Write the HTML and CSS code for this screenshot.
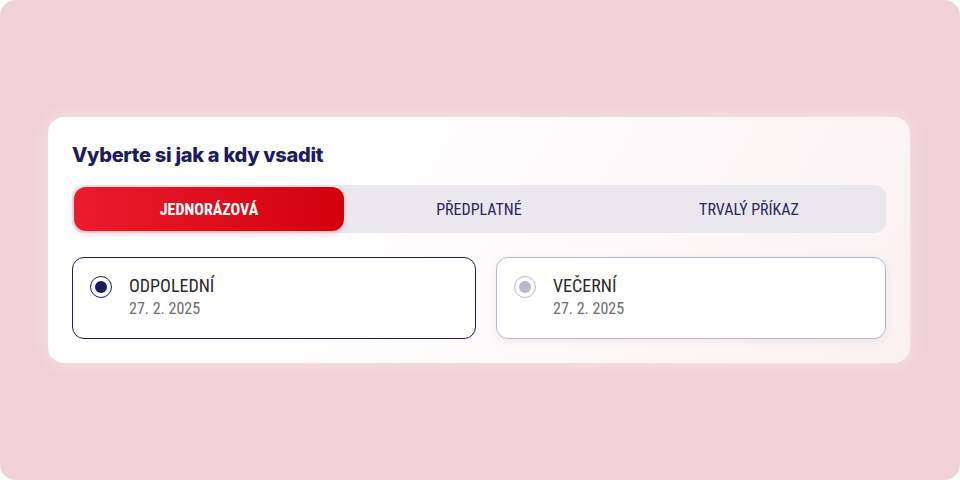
FILE: index.html
```html
<!DOCTYPE html>
<html lang="cs">
<head>
    <meta charset="UTF-8">
    <meta name="viewport" content="width=device-width, initial-scale=1.0">
    <title>Vyberte si jak a kdy vsadit</title>
    <link rel="stylesheet" href="styles.css">
</head>
<body>
    <div class="frame">
        <div class="card">
            <h2 class="title">Vyberte si jak a kdy vsadit</h2>
            <div class="tabs">
                <button class="tab active">JEDNORÁZOVÁ</button>
                <button class="tab">PŘEDPLATNÉ</button>
                <button class="tab">TRVALÝ PŘÍKAZ</button>
            </div>
            <div class="draws">
                <label class="draw selected">
                    <span class="radio"></span>
                    <span class="draw-text">
                        <span class="draw-name">ODPOLEDNÍ</span>
                        <span class="draw-date">27. 2. 2025</span>
                    </span>
                </label>
                <label class="draw">
                    <span class="radio"></span>
                    <span class="draw-text">
                        <span class="draw-name">VEČERNÍ</span>
                        <span class="draw-date">27. 2. 2025</span>
                    </span>
                </label>
            </div>
        </div>
    </div>
</body>
</html>
```

FILE: styles.css
```css
body {
    margin: 0;
    background: #fff;
    font-family: Roboto, "Liberation Sans", sans-serif;
}
.frame {
    height: 480px;
    box-sizing: border-box;
    background: #f0d2d6;
    border-radius: 16px;
    padding: 117px 50px 0 48px;
}
.card {
    background: linear-gradient(120deg, #ffffff 30%, #fbf1f3 100%);
    border-radius: 16px;
    padding: 26px 24px 24px;
    box-shadow: 0 0 20px rgba(255, 255, 255, 0.4);
}
.title {
    margin: 0 0 18px;
    font-family: Inter, sans-serif;
    font-size: 20px;
    line-height: 24px;
    font-weight: 800;
    color: #1e1c5c;
    letter-spacing: -0.3px;
}
.tabs {
    display: grid;
    grid-template-columns: repeat(3, 1fr);
    padding: 2px;
    height: 48px;
    box-sizing: border-box;
    background: #ebe7ef;
    border-radius: 12px;
}
.tab {
    border: 0;
    background: none;
    border-radius: 12px;
    font-family: "Roboto Condensed", Roboto, sans-serif;
    font-stretch: condensed;
    font-size: 16px;
    color: #2a2660;
    cursor: pointer;
}
.tab.active {
    background: linear-gradient(90deg, #ea1c2d, #d3000e);
    color: #fff;
    font-weight: 700;
    box-shadow: 0 2px 6px rgba(210, 0, 20, 0.2);
}
.draws {
    display: grid;
    grid-template-columns: 404px 1fr;
    gap: 20px;
    margin-top: 24px;
}
.draw {
    display: flex;
    align-items: flex-start;
    gap: 17px;
    height: 82px;
    box-sizing: border-box;
    padding: 17px;
    background: #fff;
    border: 1px solid #b9b7cf;
    border-radius: 12px;
    box-shadow: 0 2px 8px rgba(60, 40, 80, 0.08);
}
.draw.selected {
    border-color: #1e1c5c;
    box-shadow: none;
}
.radio {
    width: 22px;
    height: 22px;
    box-sizing: border-box;
    border: 1.5px solid #b9b7cf;
    border-radius: 50%;
    margin-top: 1px;
    display: flex;
    align-items: center;
    justify-content: center;
}
.radio::after {
    content: "";
    width: 12px;
    height: 12px;
    border-radius: 50%;
    background: #b9b7cf;
}
.draw.selected .radio {
    border-color: #1e1c5c;
}
.draw.selected .radio::after {
    background: #1e1c5c;
}
.draw-text {
    display: flex;
    flex-direction: column;
    font-family: "Roboto Condensed", Roboto, sans-serif;
    font-stretch: condensed;
}
.draw-name {
    font-size: 18px;
    line-height: 22px;
    color: #2b2b2b;
}
.draw-date {
    font-size: 16px;
    line-height: 24px;
    color: #6b6b6b;
}
```
